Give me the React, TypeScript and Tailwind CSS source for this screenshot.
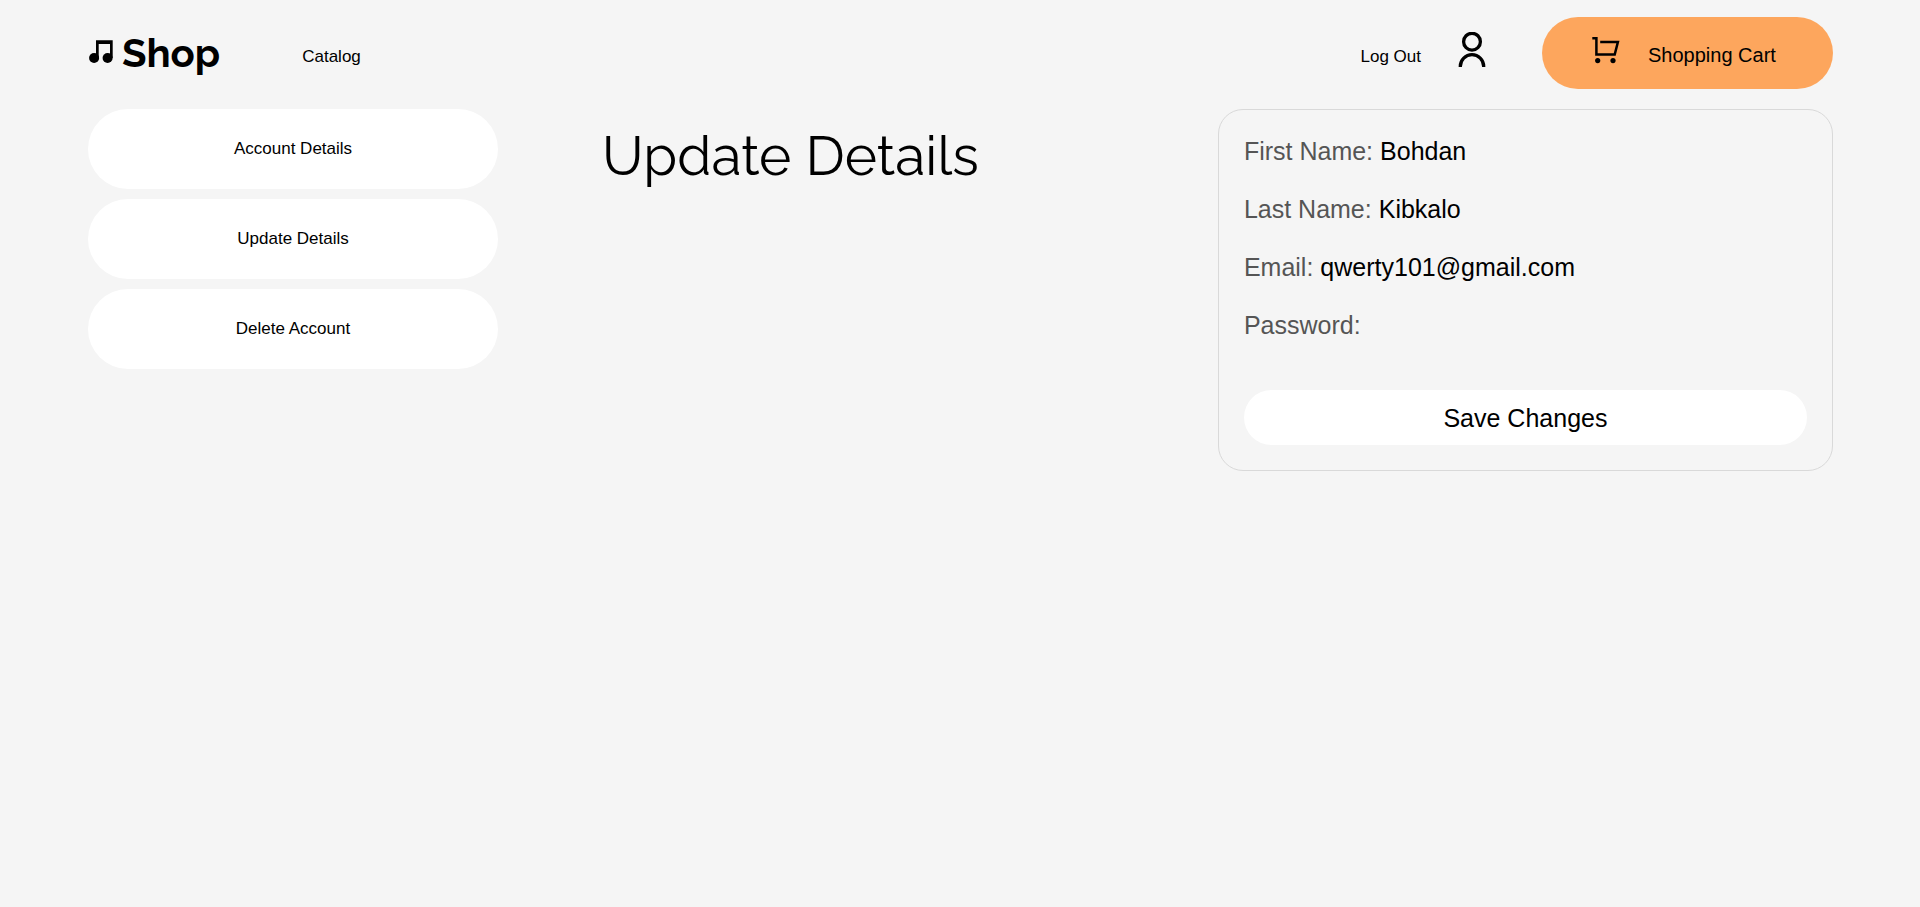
import { useState } from "react";

function NoteIcon() {
  return (
    <svg width="25" height="23" viewBox="0 0 25 23" aria-hidden="true">
      <circle cx="6.1" cy="18" r="5" />
      <circle cx="19.6" cy="18" r="5" />
      <path d="M8 18V0.3H24.7V18H22V4H10.7V18Z" />
    </svg>
  );
}

function UserIcon() {
  return (
    <svg width="28" height="36" viewBox="0 0 28 36" fill="none" stroke="currentColor" strokeWidth="3.3" aria-hidden="true">
      <circle cx="14" cy="9.7" r="8.4" />
      <path d="M2.3 35V34.4A11.7 11.7 0 0 1 25.7 34.4V35" />
    </svg>
  );
}

function CartIcon() {
  return (
    <svg width="28" height="27" viewBox="0 0 28 27" fill="none" stroke="currentColor" strokeWidth="2.5" aria-hidden="true">
      <path d="M0.3 1.3H4.4V17.5H22.7L25.9 5.1H8.2" />
      <circle cx="5.7" cy="23.6" r="2.6" fill="currentColor" stroke="none" />
      <circle cx="21" cy="23.6" r="2.6" fill="currentColor" stroke="none" />
    </svg>
  );
}

const menu = ["Account Details", "Update Details", "Delete Account"];

const fields = [
  { id: "firstName", label: "First Name:", type: "text" },
  { id: "lastName", label: "Last Name:", type: "text" },
  { id: "email", label: "Email:", type: "email" },
  { id: "password", label: "Password:", type: "password" },
];

export default function App() {
  const [values, setValues] = useState<Record<string, string>>({
    firstName: "Bohdan",
    lastName: "Kibkalo",
    email: "qwerty101@gmail.com",
    password: "",
  });

  return (
    <div className="min-h-screen bg-[#f5f5f5] pr-[87px] pl-[88px] font-['Liberation_Sans',Arial,sans-serif] text-[17px] text-black">
      <header className="flex items-center pt-[17px] pb-5">
        <a href="#" className="flex items-center gap-[9px] font-['Raleway','Inter',sans-serif] text-[40px] leading-[48px] font-bold">
          <span className="pb-1">
            <NoteIcon />
          </span>
          Shop
        </a>
        <a href="#catalog" className="ml-[82px] pt-2">Catalog</a>
        <div className="ml-auto flex items-center">
          <a href="#logout" className="pt-2">Log Out</a>
          <a href="#account" aria-label="Account" className="ml-[37px] pb-1.5">
            <UserIcon />
          </a>
          <button type="button" className="ml-14 flex h-[72px] w-[291px] items-center gap-7 rounded-full bg-[#fda65d] pl-[50px] text-xl">
            <span className="pb-1.5">
              <CartIcon />
            </span>
            <span className="pt-1">Shopping Cart</span>
          </button>
        </div>
      </header>

      <main className="flex items-start">
        <nav className="flex w-[23.5%] flex-col gap-[10px]">
          {menu.map((item) => (
            <button key={item} type="button" className="h-20 rounded-full bg-white">
              {item}
            </button>
          ))}
        </nav>
        <h1 className="flex-1 pt-3.5 pl-[104px] font-['Raleway','Open_Sans',sans-serif] text-[55px] leading-[66px] font-normal">Update Details</h1>
        <form
          onSubmit={(e) => e.preventDefault()}
          className="flex w-[35.25%] flex-col gap-6 rounded-[25px] border border-[#d9d9d9] p-[25px] text-[25px]"
        >
          {fields.map((f) => (
            <div key={f.id} className="flex h-[34px] items-center gap-[7px]">
              <label htmlFor={f.id} className="shrink-0 text-[#555555]">
                {f.label}
              </label>
              <input
                id={f.id}
                type={f.type}
                value={values[f.id]}
                onChange={(e) => setValues({ ...values, [f.id]: e.target.value })}
                className="min-w-0 flex-1 bg-transparent outline-none"
              />
            </div>
          ))}
          <button type="submit" className="mt-[23px] h-[55px] rounded-full bg-white pt-0.5">
            Save Changes
          </button>
        </form>
      </main>
    </div>
  );
}
